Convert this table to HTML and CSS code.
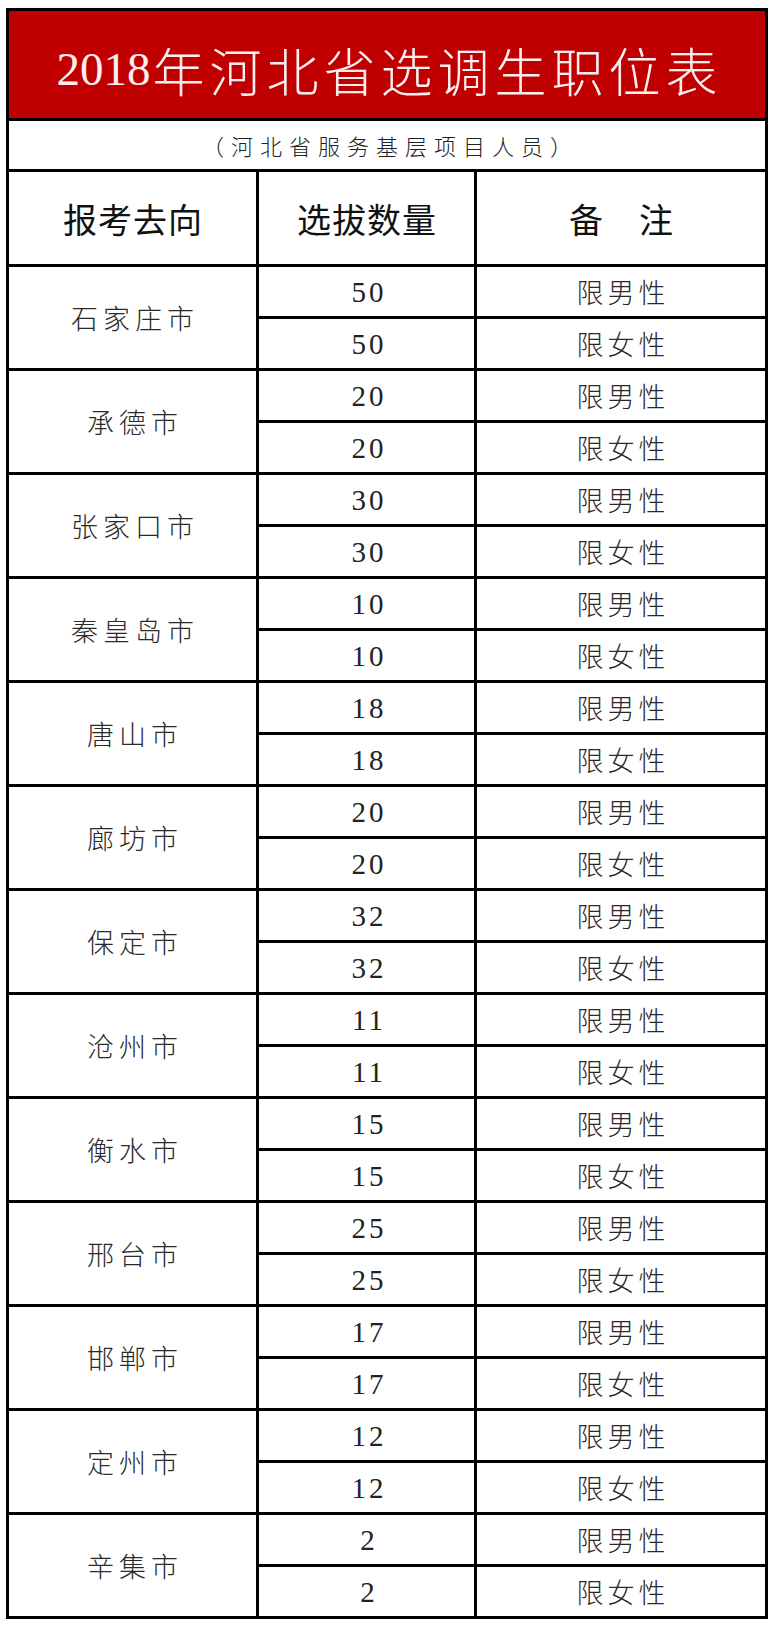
FILE: index.html
```html
<!DOCTYPE html>
<html lang="zh-CN">
<head>
<meta charset="utf-8">
<title>2018年河北省选调生职位表</title>
<link rel="stylesheet" href="styles.css">
</head>
<body>
<div class="page">
  <div class="sheet">
    <div class="title"><span class="num">2018</span><span class="words">年河北省选调生职位表</span></div>
    <div class="subtitle">（河北省服务基层项目人员）</div>
    <div class="head">报考去向</div>
    <div class="head">选拔数量</div>
    <div class="head">备　注</div>

    <div class="city">石家庄市</div><div class="qty">50</div><div class="note">限男性</div>
    <div class="qty">50</div><div class="note">限女性</div>

    <div class="city">承德市</div><div class="qty">20</div><div class="note">限男性</div>
    <div class="qty">20</div><div class="note">限女性</div>

    <div class="city">张家口市</div><div class="qty">30</div><div class="note">限男性</div>
    <div class="qty">30</div><div class="note">限女性</div>

    <div class="city">秦皇岛市</div><div class="qty">10</div><div class="note">限男性</div>
    <div class="qty">10</div><div class="note">限女性</div>

    <div class="city">唐山市</div><div class="qty">18</div><div class="note">限男性</div>
    <div class="qty">18</div><div class="note">限女性</div>

    <div class="city">廊坊市</div><div class="qty">20</div><div class="note">限男性</div>
    <div class="qty">20</div><div class="note">限女性</div>

    <div class="city">保定市</div><div class="qty">32</div><div class="note">限男性</div>
    <div class="qty">32</div><div class="note">限女性</div>

    <div class="city">沧州市</div><div class="qty">11</div><div class="note">限男性</div>
    <div class="qty">11</div><div class="note">限女性</div>

    <div class="city">衡水市</div><div class="qty">15</div><div class="note">限男性</div>
    <div class="qty">15</div><div class="note">限女性</div>

    <div class="city">邢台市</div><div class="qty">25</div><div class="note">限男性</div>
    <div class="qty">25</div><div class="note">限女性</div>

    <div class="city">邯郸市</div><div class="qty">17</div><div class="note">限男性</div>
    <div class="qty">17</div><div class="note">限女性</div>

    <div class="city">定州市</div><div class="qty">12</div><div class="note">限男性</div>
    <div class="qty">12</div><div class="note">限女性</div>

    <div class="city">辛集市</div><div class="qty">2</div><div class="note">限男性</div>
    <div class="qty">2</div><div class="note">限女性</div>
  </div>
</div>
</body>
</html>
```

FILE: styles.css
```css
html, body {
  margin: 0;
  padding: 0;
  background: #ffffff;
}

.page {
  padding: 8px 0 0 6px;
}

.sheet {
  display: grid;
  width: 756px;
  grid-template-columns: 247px 215px 288px;
  grid-template-rows: 107px 48px 92px repeat(26, 49px);
  gap: 3px;
  padding: 3px;
  background: #000000;
  font-family: "Noto Sans CJK SC", "Noto Sans", sans-serif;
  color: #222222;
}

.sheet > div {
  background: #ffffff;
  display: flex;
  align-items: center;
  justify-content: center;
  white-space: nowrap;
  overflow: hidden;
}

.sheet > .title {
  grid-column: 1 / 4;
  background: #c00000;
  color: #fbeeee;
  padding-top: 10px;
  box-sizing: border-box;
}

.title .num {
  font-family: "Liberation Serif", serif;
  font-size: 47px;
  line-height: 1;
  margin-right: 2px;
}

.title .words {
  font-family: "Noto Sans CJK SC", sans-serif;
  font-weight: 300;
  font-size: 52px;
  line-height: 1;
  letter-spacing: 5px;
  margin-right: -5px;
}

.sheet > .subtitle {
  grid-column: 1 / 4;
  font-size: 22px;
  font-weight: 300;
  letter-spacing: 7px;
  padding-left: 7px;
  color: #222222;
}

.sheet > .head {
  font-size: 34px;
  font-weight: 400;
  color: #111111;
  letter-spacing: 1px;
  padding-left: 1px;
}

.sheet > .city {
  grid-row: span 2;
  font-size: 27px;
  font-weight: 300;
  letter-spacing: 5px;
  padding-left: 5px;
  color: #2a2a2a;
}

.sheet > .qty {
  font-family: "Liberation Serif", serif;
  font-size: 29px;
  letter-spacing: 3px;
  padding-left: 5px;
  padding-top: 2px;
  color: #222222;
}

.sheet > .note {
  grid-column: 3;
  font-size: 27px;
  font-weight: 300;
  letter-spacing: 4px;
  padding-left: 4px;
  color: #2a2a2a;
}
```
